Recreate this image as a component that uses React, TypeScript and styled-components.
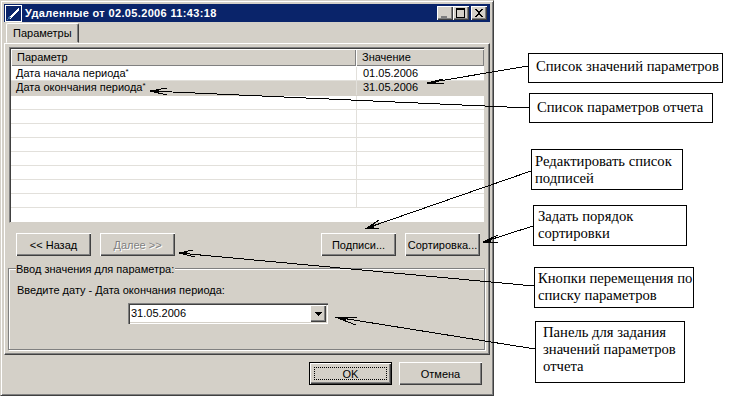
import React from "react"
import styled, { createGlobalStyle } from "styled-components"

const Global = createGlobalStyle`
  html, body {
    margin: 0;
    padding: 0;
    background: #fff;
  }
`

const S = {
  Page: styled.div`
    position: relative;
    width: 730px;
    height: 401px;
    display: flex;
    overflow: hidden;
    background: #fff;
    font-family: "Liberation Sans", Arial, sans-serif;
    font-size: 11px;
    color: #000;
  `,
  Window: styled.div`
    width: 494px;
    height: 396px;
    box-sizing: border-box;
    flex: none;
    display: flex;
    flex-direction: column;
    padding: 3px 3px 0 3px;
    background: #d4d0c8;
    border: 1px solid;
    border-color: #d4d0c8 #404040 #404040 #d4d0c8;
    box-shadow: inset 1px 1px 0 #fff, inset -1px -1px 0 #808080;
  `,
  TitleBar: styled.div`
    height: 18px;
    flex: none;
    display: flex;
    align-items: center;
    padding: 0 3px 0 1px;
    background: #0a246a;
  `,
  Title: styled.span`
    flex: 1;
    margin-left: 3px;
    color: #fff;
    font-weight: bold;
    font-size: 11px;
    letter-spacing: 0.35px;
    white-space: nowrap;
  `,
  CaptionButton: styled.div<{ $gap?: number }>`
    width: 16px;
    height: 14px;
    box-sizing: border-box;
    margin-left: ${(p) => p.$gap ?? 0}px;
    display: flex;
    background: #d4d0c8;
    box-shadow: inset 1px 1px 0 #fff, inset -1px -1px 0 #404040, inset -2px -2px 0 #808080;
    svg {
      display: block;
    }
  `,
  TabStrip: styled.div`
    height: 21px;
    flex: none;
    display: flex;
    align-items: flex-end;
    padding-left: 2px;
  `,
  Tab: styled.div`
    width: 73px;
    height: 20px;
    box-sizing: border-box;
    padding: 3px 0 0 6px;
    border: 1px solid;
    border-color: #fff #404040 transparent #fff;
    border-radius: 2px 2px 0 0;
    box-shadow: inset -1px 0 0 #808080;
  `,
  TabPage: styled.div`
    height: 312px;
    flex: none;
    box-sizing: border-box;
    display: flex;
    flex-direction: column;
    padding: 3px 4px 0 4px;
    border: 1px solid;
    border-color: #fff #404040 #404040 #fff;
    box-shadow: inset -1px -1px 0 #808080;
  `,
  List: styled.div`
    height: 176px;
    flex: none;
    box-sizing: border-box;
    display: flex;
    flex-direction: column;
    overflow: hidden;
    background: #fff;
    border: 1px solid;
    border-color: #808080 #d4d0c8 #d4d0c8 #808080;
    box-shadow: inset 1px 1px 0 #404040;
    padding: 1px 0 0 1px;
  `,
  HeaderRow: styled.div`
    height: 17px;
    flex: none;
    display: grid;
    grid-template-columns: 345px 1fr;
    margin-bottom: 1px;
  `,
  HeaderCell: styled.div`
    box-sizing: border-box;
    padding: 2px 0 0 6px;
    background: #d4d0c8;
    box-shadow: inset 1px 1px 0 #fff, inset -1px -1px 0 #808080;
  `,
  Row: styled.div<{ $selected?: boolean; $tall?: boolean }>`
    height: ${(p) => (p.$tall ? 15 : 14)}px;
    flex: none;
    box-sizing: border-box;
    display: grid;
    grid-template-columns: 345px 1fr;
    background: ${(p) => (p.$selected ? "#d4d0c8" : "#fff")};
    border-bottom: 1px solid ${(p) => (p.$selected ? "#d4d0c8" : "#e2e0db")};
  `,
  Cell: styled.div<{ $divider?: boolean }>`
    box-sizing: border-box;
    padding-left: ${(p) => (p.$divider ? 6 : 4)}px;
    line-height: 13px;
    white-space: nowrap;
    border-left: 1px solid ${(p) => (p.$divider ? "#e2e0db" : "transparent")};
  `,
  Star: styled.sup`
    font-size: 8px;
    line-height: 0;
    vertical-align: 3px;
  `,
  ButtonRow: styled.div`
    height: 23px;
    flex: none;
    display: flex;
    margin: 10px 0 0 7px;
    gap: 9px;
  `,
  Spacer: styled.div`
    flex: none;
    width: 128px;
  `,
  Button: styled.button<{ $wide?: boolean }>`
    width: ${(p) => (p.$wide ? 83 : 75)}px;
    height: 23px;
    flex: none;
    box-sizing: border-box;
    padding: 0;
    font: inherit;
    color: #000;
    background: #d4d0c8;
    border: 0;
    box-shadow: inset 1px 1px 0 #fff, inset -1px -1px 0 #404040, inset -2px -2px 0 #808080;
    &:disabled {
      color: #808080;
      text-shadow: 1px 1px 0 #fff;
    }
  `,
  Group: styled.div`
    position: relative;
    height: 82px;
    flex: none;
    box-sizing: border-box;
    margin: 12px 0 0 -1px;
    padding: 15px 8px 0 8px;
    border: 1px solid #808080;
    box-shadow: 1px 1px 0 #fff, inset 1px 1px 0 #fff;
  `,
  Legend: styled.span`
    position: absolute;
    left: 7px;
    top: -6px;
    padding-right: 1px;
    line-height: 13px;
    background: #d4d0c8;
  `,
  Prompt: styled.div`
    height: 13px;
    line-height: 13px;
  `,
  ComboRow: styled.div`
    display: flex;
    justify-content: flex-start;
    margin: 6px 0 0 111px;
  `,
  Combo: styled.div`
    width: 200px;
    height: 21px;
    box-sizing: border-box;
    display: flex;
    align-items: stretch;
    padding: 2px;
    background: #fff;
    box-shadow: inset 1px 1px 0 #808080, inset 2px 2px 0 #404040, inset -1px -1px 0 #fff, inset -2px -2px 0 #d4d0c8;
  `,
  ComboValue: styled.div`
    flex: 1;
    padding-left: 1px;
    line-height: 16px;
  `,
  ComboButton: styled.div`
    width: 16px;
    flex: none;
    display: flex;
    align-items: center;
    justify-content: center;
    background: #d4d0c8;
    box-shadow: inset 1px 1px 0 #fff, inset -1px -1px 0 #404040, inset -2px -2px 0 #808080;
  `,
  Footer: styled.div`
    display: flex;
    justify-content: flex-end;
    gap: 7px;
    padding: 7px 8px 0 0;
  `,
  DefaultButton: styled.div`
    width: 83px;
    height: 23px;
    box-sizing: border-box;
    padding: 4px;
    background: #d4d0c8;
    border: 1px solid #000;
    box-shadow: inset 1px 1px 0 #fff, inset -1px -1px 0 #404040, inset -2px -2px 0 #808080;
  `,
  FocusRing: styled.div`
    height: 100%;
    box-sizing: border-box;
    display: flex;
    align-items: center;
    justify-content: center;
    border: 1px dotted #000;
  `,
  Notes: styled.div`
    flex: 1;
    display: flex;
    flex-direction: column;
    font-family: "Liberation Serif", "Times New Roman", serif;
    font-size: 14.67px;
    line-height: 17px;
  `,
  Note: styled.div<{ $left: number; $top: number; $width: number; $height: number; $padTop: number; $padLeft: number }>`
    width: ${(p) => p.$width}px;
    height: ${(p) => p.$height}px;
    box-sizing: border-box;
    flex: none;
    margin: ${(p) => p.$top}px 0 0 ${(p) => p.$left}px;
    padding: ${(p) => p.$padTop}px 0 0 ${(p) => p.$padLeft}px;
    background: #fff;
    border: 1px solid #000;
    white-space: pre;
  `,
  Arrows: styled.svg`
    position: absolute;
    left: 0;
    top: 0;
    width: 730px;
    height: 401px;
    pointer-events: none;
  `,
}

const AppIcon = () => (
  <svg width="17" height="17" viewBox="0 0 17 17" shapeRendering="crispEdges">
    <rect width="17" height="17" fill="#fff" />
    <rect x="1" y="1" width="15" height="15" fill="#0a246a" />
    <path d="M3 14 L14 2 L14 14 Z" fill="#fff" />
    <path d="M5 14 L14 5 L14 14 Z" fill="#0a246a" />
    <path d="M2 15 L4 11 L6 13 Z" fill="#3a6ea5" />
  </svg>
)

const CaptionIcon = ({ kind }: { kind: "min" | "max" | "close" }) => (
  <svg width="16" height="14" viewBox="0 0 16 14" shapeRendering="crispEdges">
    {kind === "min" && <rect x="4" y="10" width="6" height="2" fill="#808080" />}
    {kind === "max" && <path d="M3 2.5h9M3 3.5h9M3.5 3v8.500M11.5 3v8.500M3 11.5h9" stroke="#000" fill="none" />}
    {kind === "close" && (
      <path d="M4 3h2l1.5 2h1L10 3h2L9 7l3 4h-2L8.500 9h-1L6 11H4l3-4z" fill="#000" />
    )}
  </svg>
)

// arrow: line from the note to the tip, with two open barbs at the tip
const arrows = [
  { from: [528, 66], tip: [427, 83], a: [443, 79], b: [444, 84] },
  { from: [529, 108], tip: [150, 91], a: [167, 88], b: [167, 95] },
  { from: [531, 171], tip: [367, 228], a: [379, 220], b: [379, 228] },
  { from: [533, 226], tip: [483, 242], a: [498, 235], b: [498, 242] },
  { from: [534, 286], tip: [179, 253], a: [193, 250], b: [195, 257] },
  { from: [535, 349], tip: [335, 317], a: [357, 317], b: [356, 325] },
]

const mid = (p: number[], q: number[]) => `${(p[0] + q[0]) / 2} ${(p[1] + q[1]) / 2}`

const blankRows = [0, 1, 2, 3, 4, 5, 6, 7]

const App: React.FC = () => {
  return (
    <S.Page>
      <Global />
      <S.Window>
        <S.TitleBar>
          <AppIcon />
          <S.Title>Удаленные от 02.05.2006 11:43:18</S.Title>
          <S.CaptionButton>
            <CaptionIcon kind="min" />
          </S.CaptionButton>
          <S.CaptionButton>
            <CaptionIcon kind="max" />
          </S.CaptionButton>
          <S.CaptionButton $gap={2}>
            <CaptionIcon kind="close" />
          </S.CaptionButton>
        </S.TitleBar>
        <S.TabStrip>
          <S.Tab>Параметры</S.Tab>
        </S.TabStrip>
        <S.TabPage>
          <S.List>
            <S.HeaderRow>
              <S.HeaderCell>Параметр</S.HeaderCell>
              <S.HeaderCell>Значение</S.HeaderCell>
            </S.HeaderRow>
            <S.Row>
              <S.Cell>
                Дата начала периода<S.Star>*</S.Star>
              </S.Cell>
              <S.Cell $divider>01.05.2006</S.Cell>
            </S.Row>
            <S.Row $selected $tall>
              <S.Cell>
                Дата окончания периода<S.Star>*</S.Star>
              </S.Cell>
              <S.Cell $divider>31.05.2006</S.Cell>
            </S.Row>
            {blankRows.map((i) => (
              <S.Row key={i}>
                <S.Cell />
                <S.Cell $divider />
              </S.Row>
            ))}
          </S.List>
          <S.ButtonRow>
            <S.Button>&lt;&lt; Назад</S.Button>
            <S.Button disabled>Далее &gt;&gt;</S.Button>
            <S.Spacer />
            <S.Button>Подписи...</S.Button>
            <S.Button>Сортировка...</S.Button>
          </S.ButtonRow>
          <S.Group>
            <S.Legend>Ввод значения для параметра:</S.Legend>
            <S.Prompt>Введите дату - Дата окончания периода:</S.Prompt>
            <S.ComboRow>
              <S.Combo>
                <S.ComboValue>31.05.2006</S.ComboValue>
                <S.ComboButton>
                  <svg width="7" height="4" viewBox="0 0 7 4" shapeRendering="crispEdges">
                    <path d="M0 0h7v1h-1v1h-1v1h-1v1h-1v-1h-1v-1h-1v-1h-1z" fill="#000" />
                  </svg>
                </S.ComboButton>
              </S.Combo>
            </S.ComboRow>
          </S.Group>
        </S.TabPage>
        <S.Footer>
          <S.DefaultButton>
            <S.FocusRing>OK</S.FocusRing>
          </S.DefaultButton>
          <S.Button $wide>Отмена</S.Button>
        </S.Footer>
      </S.Window>
      <S.Notes>
        <S.Note $left={34} $top={53} $width={195} $height={30} $padTop={4} $padLeft={7}>
          Список значений параметров
        </S.Note>
        <S.Note $left={35} $top={10} $width={184} $height={30} $padTop={5} $padLeft={7}>
          Список параметров отчета
        </S.Note>
        <S.Note $left={37} $top={26} $width={152} $height={41} $padTop={3} $padLeft={3}>
          {"Редактировать список\nподписей"}
        </S.Note>
        <S.Note $left={39} $top={15} $width={154} $height={41} $padTop={2} $padLeft={4}>
          {"Задать порядок\nсортировки"}
        </S.Note>
        <S.Note $left={40} $top={21} $width={160} $height={41} $padTop={2} $padLeft={3}>
          {"Кнопки перемещения по\nсписку параметров"}
        </S.Note>
        <S.Note $left={41} $top={13} $width={150} $height={62} $padTop={2} $padLeft={7}>
          {"Панель для задания\nзначений параметров\nотчета"}
        </S.Note>
      </S.Notes>
      <S.Arrows viewBox="0 0 730 401" shapeRendering="crispEdges">
        {arrows.map((a, i) => (
          <g key={i} stroke="#000" strokeWidth="1" fill="none">
            <path d={`M${a.from[0]} ${a.from[1]} L${a.tip[0]} ${a.tip[1]}`} />
            <path d={`M${a.a[0]} ${a.a[1]} L${a.tip[0]} ${a.tip[1]} L${a.b[0]} ${a.b[1]}`} />
            <path d={`M${a.tip[0]} ${a.tip[1]} L${mid(a.tip, a.a)} L${mid(a.tip, a.b)} Z`} fill="#000" />
          </g>
        ))}
      </S.Arrows>
    </S.Page>
  )
}

export default App
